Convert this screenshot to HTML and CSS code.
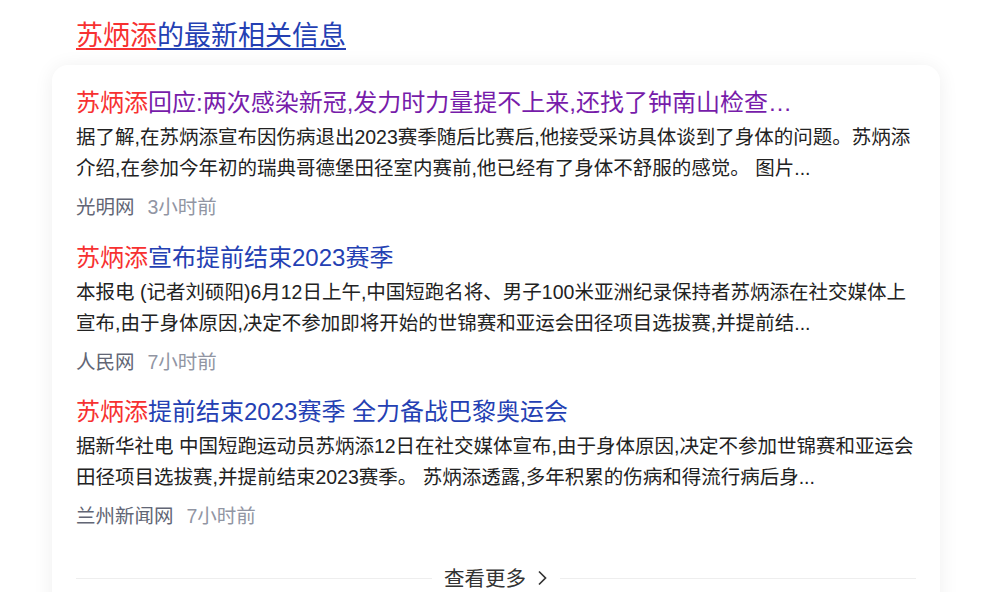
FILE: index.html
```html
<!DOCTYPE html>
<html lang="zh-CN">
<head>
<meta charset="utf-8">
<title>苏炳添的最新相关信息</title>
<link rel="stylesheet" href="styles.css">
</head>
<body>
<div class="wrap">
  <h2 class="heading"><a href="#"><em>苏炳添</em>的最新相关信息</a></h2>
  <div class="card">
    <div class="item">
      <a class="title visited" href="#"><em>苏炳添</em>回应:两次感染新冠,发力时力量提不上来,还找了钟南山检查…</a>
      <p class="desc">据了解,在苏炳添宣布因伤病退出2023赛季随后比赛后,他接受采访具体谈到了身体的问题。苏炳添介绍,在参加今年初的瑞典哥德堡田径室内赛前,他已经有了身体不舒服的感觉。 图片...</p>
      <div class="meta"><span class="src">光明网</span><span class="time">3小时前</span></div>
    </div>
    <div class="item">
      <a class="title" href="#"><em>苏炳添</em>宣布提前结束2023赛季</a>
      <p class="desc">本报电 (记者刘硕阳)6月12日上午,中国短跑名将、男子100米亚洲纪录保持者苏炳添在社交媒体上宣布,由于身体原因,决定不参加即将开始的世锦赛和亚运会田径项目选拔赛,并提前结...</p>
      <div class="meta"><span class="src">人民网</span><span class="time">7小时前</span></div>
    </div>
    <div class="item">
      <a class="title" href="#"><em>苏炳添</em>提前结束2023赛季 全力备战巴黎奥运会</a>
      <p class="desc">据新华社电 中国短跑运动员苏炳添12日在社交媒体宣布,由于身体原因,决定不参加世锦赛和亚运会田径项目选拔赛,并提前结束2023赛季。 苏炳添透露,多年积累的伤病和得流行病后身...</p>
      <div class="meta"><span class="src">兰州新闻网</span><span class="time">7小时前</span></div>
    </div>
    <div class="more">
      <span class="line"></span>
      <a class="more-link" href="#">查看更多<svg class="chev" width="12" height="18" viewBox="0 0 12 18"><path d="M3 2.5 L9.5 9 L3 15.5" fill="none" stroke="#333" stroke-width="1.7"/></svg></a>
      <span class="line"></span>
    </div>
  </div>
</div>
</body>
</html>
```

FILE: styles.css
```css
html, body {
  margin: 0;
  padding: 0;
  background: #fff;
}
body {
  font-family: Arial, "Liberation Sans", "Noto Sans CJK SC", sans-serif;
  color: #333;
}
a { text-decoration: none; }
em { font-style: normal; color: #f73131; }

.wrap {
  padding: 18px 53px 0 52px;
}
.heading {
  margin: 0 0 0 24px;
  font-size: 27px;
  font-weight: normal;
  line-height: 36px;
}
.heading a {
  color: #2440b3;
  text-decoration: underline;
  text-decoration-thickness: 2px;
  text-underline-offset: 3px;
}
.heading a em { text-decoration: underline; text-decoration-color: #f73131; }

.card {
  margin-top: 11px;
  background: #fff;
  border-radius: 16px;
  box-shadow: 0 2px 20px rgba(0, 0, 0, 0.07);
  padding: 22px 24px 40px 24px;
  display: flex;
  flex-direction: column;
  gap: 18.5px;
}
.item {
  display: flex;
  flex-direction: column;
}
.title {
  font-size: 24px;
  line-height: 32px;
  color: #2440b3;
  white-space: nowrap;
}
.title.visited { color: #771caa; }
.desc {
  margin: 3px 0 0 0;
  font-size: 19.5px;
  line-height: 31px;
  color: #222;
}
.meta {
  margin-top: 8px;
  font-size: 19.5px;
  line-height: 31px;
  display: flex;
  gap: 13px;
}
.src { color: #626675; }
.time { color: #9195a3; }

.more {
  margin-top: 12px;
  display: flex;
  align-items: center;
  gap: 12px;
  height: 31px;
}
.line {
  flex: 1;
  height: 1px;
  background: #eeeeee;
}
.more-link {
  font-size: 20.5px;
  line-height: 31px;
  color: #333;
  display: flex;
  align-items: center;
  gap: 10px;
}
.chev { display: block; }
```
